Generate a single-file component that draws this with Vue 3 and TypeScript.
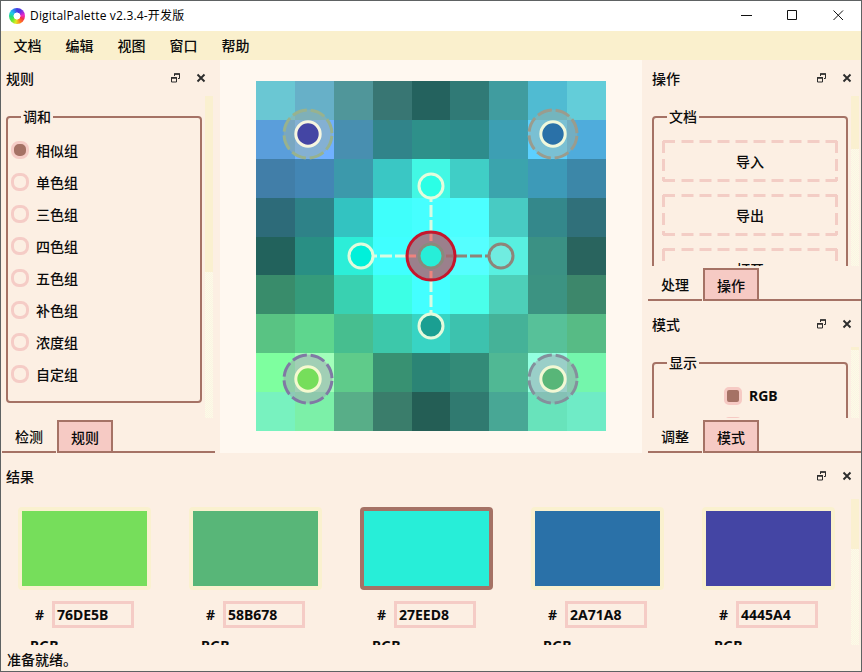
<script setup lang="ts">
import { ref } from 'vue'

interface Swatch { hex: string }
interface Marker { x: number; y: number; fill: string; halo: string; ring: string }
interface Node { x: number; y: number; fill: string; ring: string }

const menus = ['文档', '编辑', '视图', '窗口', '帮助']
const rules = ['相似组', '单色组', '三色组', '四色组', '五色组', '补色组', '浓度组', '自定组']
const rule = ref('相似组')
const actions = ['导入', '导出', '打开']
const displays = [{ name: 'RGB', on: true }]

// Outlines of the dock "float" button: the two frames, then their heavier top edges.
const floatFrame = 'M3.500 3V1h5v4.500H7M.5 4.500h5v4.500h-5z'
const floatTop = 'M3 1h6M0 5h6'
const closeCross = 'M26.500 1.500l7 7M33.500 1.500l-7 7'

const swatches: Swatch[] = [
  { hex: '76DE5B' }, { hex: '58B678' }, { hex: '27EED8' }, { hex: '2A71A8' }, { hex: '4445A4' },
]
const current = ref(2)

const board: string[][] = [
  ['6ac7d3', '67b0c8', '50969a', '387673', '24625e', '307a76', '409c9f', '50bbd2', '63cdd9'],
  ['5a9edb', '70b0ff', '488fb0', '31848a', '2e908a', '2e8c8c', '3d9fb3', '5cd0ff', '4facdc'],
  ['417ea8', '4386b4', '3c99ab', '3ac7c4', '42f8e4', '40cec6', '3ba4ad', '3d9ab8', '3c87a8'],
  ['2d6b79', '2e8288', '33c3c1', '3ffffb', '46ffff', '4cffff', '48cbc3', '34888b', '30707a'],
  ['22625c', '298f84', '2ceed8', '40ffff', '4affff', '55ffff', '58f0e0', '3b9184', '29645e'],
  ['398c6b', '359b7b', '39d1b1', '3cffe5', '44ffff', '4affea', '4dcfb8', '3c9382', '3d876b'],
  ['59c383', '5ed68e', '47be8f', '3dc8aa', '38d4c4', '3dc2ae', '45b298', '57c199', '57bb85'],
  ['7eff9f', 'a2ffba', '5fcb8a', '389172', '2b8475', '338b78', '50b894', '94ffe0', '74f6ac'],
  ['78f2bf', '7cf0a8', '58ae88', '3a7d6b', '245e55', '307a70', '48a795', '68e3bb', '6febc6'],
]
const edge = (i: number): number => Math.round((i * 350) / 9)

const markers: Marker[] = [
  { x: 52, y: 53, fill: '#4445a4', halo: '#98b28e', ring: '#f6f5e0' },
  { x: 297, y: 53, fill: '#2a71a8', halo: '#9a9c8e', ring: '#f0f8dc' },
  { x: 52, y: 298, fill: '#76de5b', halo: '#8079a4', ring: '#f4f9cf' },
  { x: 297, y: 298, fill: '#58b678', halo: '#84909c', ring: '#f2f8d4' },
]
const nodes: Node[] = [
  { x: 175, y: 105, fill: '#2bffe6', ring: '#e3fcdc' },
  { x: 105, y: 175, fill: '#00f0da', ring: '#e0fbdc' },
  { x: 175, y: 245, fill: '#1a9f92', ring: '#e4fadc' },
  { x: 245, y: 175, fill: '#70ece0', ring: '#8f8479' },
]
</script>

<template>
  <div class="window">
    <header class="titlebar">
      <span class="logo"></span>
      <span class="caption">DigitalPalette v2.3.4-开发版</span>
      <svg class="winbtns" width="120" height="30" viewBox="0 0 120 30" fill="none" stroke="#111">
        <path d="M1 14.500h11M47.500 9.500h9v9h-9zM93.500 9.500l9.500 9.500M103 9.500l-9.500 9.500" />
      </svg>
    </header>

    <nav class="menubar"><span v-for="m in menus" :key="m">{{ m }}</span></nav>

    <main class="main">
      <section class="dock left">
        <div class="dock-title">
          <span>规则</span>
          <svg class="dock-btns" width="35" height="10" viewBox="0 0 35 10" fill="none" stroke="#2c2c2c">
            <path :d="floatFrame" /><path :d="floatTop" stroke-width="1.600" />
            <path :d="closeCross" stroke-width="1.900" />
          </svg>
        </div>
        <div class="scroll">
          <fieldset class="group rules">
            <legend>调和</legend>
            <label v-for="r in rules" :key="r" class="row" @click="rule = r">
              <i class="radio" :class="{ on: r === rule }"></i><span>{{ r }}</span>
            </label>
          </fieldset>
          <div class="bar"><i class="thumb"></i></div>
        </div>
        <div class="tabs"><span class="tab">检测</span><span class="tab active">规则</span><i class="rest"></i></div>
      </section>

      <section class="canvas">
        <svg width="350" height="350" viewBox="0 0 350 350" fill="none">
          <g shape-rendering="crispEdges">
            <template v-for="(line, y) in board" :key="y">
              <rect v-for="(c, x) in line" :key="x" :x="edge(x)" :y="edge(y)"
                :width="edge(x + 1) - edge(x)" :height="edge(y + 1) - edge(y)" :fill="'#' + c" />
            </template>
          </g>
          <g v-for="(m, i) in markers" :key="'m' + i">
            <circle :cx="m.x" :cy="m.y" r="24.500" :fill="i < 2 ? '#98b0a8' : '#a0a0b0'" fill-opacity=".5" />
            <circle :cx="m.x" :cy="m.y" r="24" :stroke="m.halo" stroke-width="3" stroke-dasharray="14.900 3.950"
              stroke-dashoffset="-2" />
            <circle :cx="m.x" :cy="m.y" r="12.200" :fill="m.fill" :stroke="m.ring" stroke-width="3" />
          </g>
          <g stroke="#d8fbe2" stroke-width="3" stroke-dasharray="12 3">
            <path d="M175 151V118M151 175H118M175 199V232" />
            <path d="M199 175H232" stroke="#8f8479" />
          </g>
          <circle cx="175" cy="175" r="24" fill="#9b808c" stroke="#c5162c" stroke-width="3" />
          <g stroke-width="3" stroke="#f0837f">
            <path d="M175 153v7M153 175h7M175 190v7" /><path d="M190 175h7" stroke="#a06d70" />
          </g>
          <circle cx="175" cy="175" r="12" fill="#27eed8" stroke="#8a8a7c" stroke-width="3" />
          <circle v-for="(n, i) in nodes" :key="'n' + i" :cx="n.x" :cy="n.y" r="12" :fill="n.fill" :stroke="n.ring"
            stroke-width="3" />
        </svg>
      </section>

      <div class="side">
        <section class="dock right ops">
          <div class="dock-title">
            <span>操作</span>
            <svg class="dock-btns" width="35" height="10" viewBox="0 0 35 10" fill="none" stroke="#2c2c2c">
              <path :d="floatFrame" /><path :d="floatTop" stroke-width="1.600" />
              <path :d="closeCross" stroke-width="1.900" />
            </svg>
          </div>
          <div class="scroll">
            <fieldset class="group files">
              <legend>文档</legend>
              <button v-for="a in actions" :key="a" class="action">
                <svg width="176" height="42" viewBox="0 0 176 42" fill="none" stroke="#f3cdc5" stroke-width="3">
                  <path d="M1 1.500H175M1 40.500H175" stroke-dasharray="12 6.500 12 6 12 6 12 6 12 6 12 6 12 6 12 6 12 6 12 10" />
                  <path d="M1.500 1V41M174.500 1V41" stroke-dasharray="12 6 12 6 12" />
                </svg>
                <span>{{ a }}</span>
              </button>
            </fieldset>
            <div class="bar"><i class="thumb"></i></div>
          </div>
          <div class="tabs"><span class="tab">处理</span><span class="tab active">操作</span><i class="rest"></i></div>
        </section>

        <section class="dock right mode">
          <div class="dock-title">
            <span>模式</span>
            <svg class="dock-btns" width="35" height="10" viewBox="0 0 35 10" fill="none" stroke="#2c2c2c">
              <path :d="floatFrame" /><path :d="floatTop" stroke-width="1.600" />
              <path :d="closeCross" stroke-width="1.900" />
            </svg>
          </div>
          <div class="scroll">
            <fieldset class="group shows">
              <legend>显示</legend>
              <label v-for="d in displays" :key="d.name" class="check-row">
                <i class="check" :class="{ on: d.on }"></i><b>{{ d.name }}</b>
              </label>
              <i class="check next"></i>
            </fieldset>
            <div class="bar"><i class="thumb"></i></div>
          </div>
          <div class="tabs"><span class="tab">调整</span><span class="tab active">模式</span><i class="rest"></i></div>
        </section>
      </div>
    </main>

    <section class="dock results">
      <div class="dock-title">
        <span>结果</span>
        <svg class="dock-btns" width="35" height="10" viewBox="0 0 35 10" fill="none" stroke="#2c2c2c">
          <path :d="floatFrame" /><path :d="floatTop" stroke-width="1.600" />
          <path :d="closeCross" stroke-width="1.900" />
        </svg>
      </div>
      <div class="scroll">
        <div class="cards">
          <div v-for="(s, i) in swatches" :key="s.hex" class="card">
            <div class="swatch" :class="{ current: i === current }" :style="{ backgroundColor: '#' + s.hex }"
              @click="current = i"></div>
            <div class="hex"><b>#</b><div class="field">{{ s.hex }}</div></div>
            <b class="model">RGB</b>
          </div>
        </div>
        <div class="bar"><i class="thumb"></i></div>
      </div>
    </section>

    <footer class="status">准备就绪。</footer>
  </div>
</template>

<style>
body { margin: 0; }
</style>

<style scoped>
* { box-sizing: border-box; }
.window {
  width: 862px; height: 672px; border: 1px solid #5e6263; display: flex; flex-direction: column;
  background: #fcefe3; color: #0b0b0b; overflow: hidden;
  font: 500 14px/20px "Noto Sans", "Noto Sans CJK SC", sans-serif;
}
.titlebar { height: 30px; background: #fff; display: flex; align-items: center; flex: none; padding-left: 8px; }
.logo {
  width: 16px; height: 16px; border-radius: 50%;
  background: radial-gradient(circle, #fff 0 3.200px, transparent 3.800px),
    conic-gradient(#4a3ae0 0 25deg, #8a2be2 50deg, #f02cc0 85deg, #f5304a 115deg, #ff7a20 150deg, #e4e820 190deg, #5be83a 230deg, #20d880 265deg, #20c8e8 300deg, #2a80f0 335deg, #4a3ae0);
}
.caption { margin-left: 5px; font: 12px/20px "Open Sans", "Noto Sans CJK SC", sans-serif; color: #000; letter-spacing: .17px; }
.winbtns { margin-left: auto; margin-right: 1px; }
.menubar { height: 29px; flex: none; background: #faf0cd; display: flex; gap: 24px; padding-left: 12.500px; line-height: 29px; }
.main { height: 393px; flex: none; display: flex; }
.dock { display: flex; flex-direction: column; }
.left { width: 219px; padding-right: 5px; }
.dock-title { height: 36px; flex: none; display: flex; align-items: center; justify-content: space-between; padding-left: 5px; }
.dock-title span { padding-top: 1px; }
.dock-btns { display: block; margin-right: 9px; }
.scroll { flex: 1; min-height: 0; overflow: hidden; display: flex; align-items: flex-start; }
.group { min-width: 0; margin: 11px 0 0 5px; border: 2px solid #a57265; border-radius: 4px; width: 196px; flex: none; padding: 0; }
.group legend { padding: 0 2px; height: 20px; line-height: 20px; }
.rules { padding: 7px 0 11px 3px; }
.rules legend { margin-left: 10px; }
.row { display: flex; align-items: center; height: 32px; gap: 7px; }
.row span { padding-top: 2px; }
.radio { width: 18px; height: 18px; border: 3px solid #f5ccc6; border-radius: 8px; }
.radio.on { background: #a57265; }
.bar {
  width: 8px; margin-left: 3px; align-self: stretch;
  background: repeating-conic-gradient(#fcf1e4 0 25%, #fbfde6 0 50%) 0 0 / 2px 2px;
}
.thumb { display: block; width: 8px; background: #faf0d0; }
.left .thumb { height: 176px; }
.left .dock-btns { margin-right: 9px; }
.tabs { display: flex; height: 35px; flex: none; padding-top: 2px; }
.tab { width: 54px; height: 33px; line-height: 32px; padding-top: 1px; text-align: center; border-bottom: 2px solid #a57265; margin: 0 1px; }
.tab.active { width: 56px; margin: 0; line-height: 30px; border: 2px solid #a57265; background: #f6cac4; }
.rest { flex: 1; border-bottom: 2px solid #a57265; }
.canvas { width: 422px; flex: none; background: #fff8f0; display: flex; padding: 21px 0 0 36px; }
.side { flex: 1; display: flex; flex-direction: column; }
.right { padding-left: 5px; }
.ops { height: 241px; }
.mode { height: 152px; }
.files { padding: 13px 0 0 8px; height: 400px; }
.files legend { margin-left: 5px; }
.action {
  display: grid; width: 176px; height: 42px; padding: 0; margin: 0 0 12px; border: 0; background: none;
  font: inherit; color: inherit; place-items: center;
}
.action > * { grid-area: 1 / 1; }
.action span { padding-top: 1px; }
.ops .thumb { height: 53px; }
.mode .dock-title { height: 46px; }
.mode .group { margin-top: 6px; height: 200px; padding: 7px 0 0 70px; }
.mode legend { margin-left: -57px; }
.mode .bar { margin-top: -3px; }
.mode .thumb { height: 6px; }
.check-row { display: flex; align-items: center; height: 31px; gap: 7px; }
.check { width: 18px; height: 18px; border: 3px solid #f6cac4; border-radius: 5px; }
.check.on { background: #a57265; }
.check.next { display: block; margin-top: 6px; }
.results { height: 192px; flex: none; }
.results .dock-title { height: 46px; }
.results .thumb { height: 50px; }
.results .bar { margin-left: auto; margin-right: 2px; }
.results .scroll { align-items: stretch; }
.cards { display: flex; gap: 38px; padding: 8px 0 0 17px; }
.card { width: 133px; flex: none; }
.swatch { width: 133px; height: 83px; border: 4px solid #faf1cf; border-radius: 4px; background-clip: padding-box; }
.swatch.current { border-color: #a57265; }
.hex { display: flex; align-items: center; height: 27px; margin-top: 11px; padding-left: 17px; }
.hex b { width: 17px; }
.field { width: 82px; height: 27px; border: 3px solid #f5ccc6; padding-left: 2px; font-weight: 700; line-height: 21px; }
.model { display: block; margin: 8px 0 0 12px; }
.status { height: 26px; line-height: 29px; padding-left: 6px; }
</style>
